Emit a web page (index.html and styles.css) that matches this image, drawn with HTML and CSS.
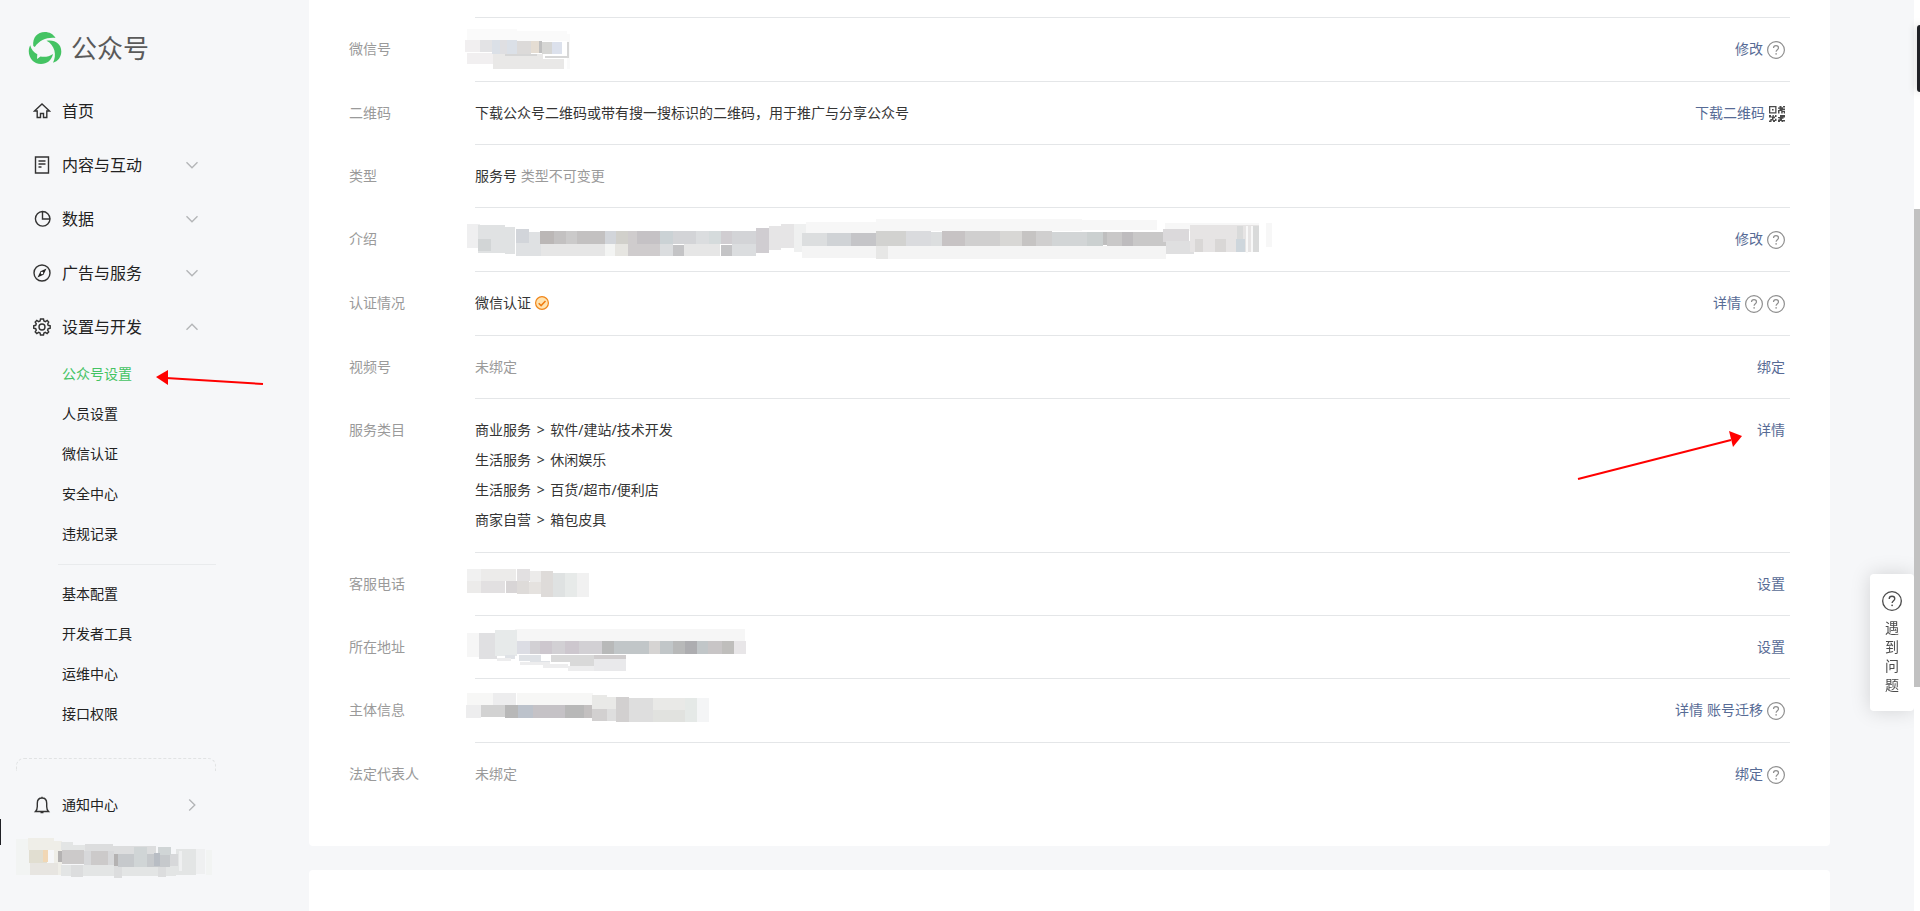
FILE: index.html
```
<!DOCTYPE html>
<html lang="zh-CN">

<head>
    <meta charset="UTF-8">
    <title>公众号</title>

    <link rel="stylesheet" href="styles.css">
</head>

<body>
    <!-- shared icons -->
    <svg width="0" height="0" class="sprite">
        <symbol id="help" viewBox="0 0 18 18">
            <circle cx="9" cy="9" r="8.400" fill="none" stroke="currentColor" stroke-width="1.200" />
            <path d="M6.500 7.100c0-1.500 1-2.400 2.500-2.400s2.500.9 2.500 2.200c0 1.700-2.400 1.900-2.400 3.900" fill="none" stroke="currentColor" stroke-width="1.200" />
            <circle cx="9.100" cy="12.900" r=".8" fill="currentColor" />
        </symbol>
        <symbol id="chevron" viewBox="0 0 12 12">
            <path d="M.5 3.200L6 8.800l5.500-5.600" fill="none" stroke="currentColor" stroke-width="1.400" />
        </symbol>
    </svg>

    <aside class="sidebar">
        <div class="logo">
            <svg width="34" height="32" viewBox="0 0 34 32">
                <path fill="#44c363" d="M5.300 14C4.300 5.500 9.500 0 16.800 0c4.500 0 8.500 2 10.700 6C19.500 5 11.500 8 6.800 15z" />
                <path fill="#44c363" d="M18.500 8.800c8-1.500 14.800 2.700 14.800 10.700 0 5.500-3.300 9.800-8.300 11.200C29 23.500 27 13 18.500 8.800z" />
                <path fill="#44c363" d="M2.200 13.200C-2 21.500 3.500 32 13 32c6 0 10.500-3.500 12-10-3.700 2.700-8.300 3.300-12.500 2.600L9 27l.3-4.700C6 20.500 3.200 17.500 2.200 13.200z" />
            </svg>
            <span>公众号</span>
        </div>

        <nav>
            <a href="#" class="menu-item">
                <svg class="icon" viewBox="0 0 18 18"><path d="M1.500 9L9 2l7.500 7h-2.700v6.500h-3.300v-4h-3v4H4.200V9z" /></svg>
                <span>首页</span>
            </a>
            <a href="#" class="menu-item">
                <svg class="icon" viewBox="0 0 18 18"><path d="M2.500 1h13v16h-13zM5.500 5h7M5.500 8h7M5.500 11h3" /></svg>
                <span>内容与互动</span>
                <svg class="arrow"><use href="#chevron" /></svg>
            </a>
            <a href="#" class="menu-item">
                <svg class="icon" viewBox="0 0 18 18"><path d="M9.500 1.500a7.300 7.300 0 1 0 7.500 7.500H9.500zM9.500 1.500A7.500 7.500 0 0 1 17 9" /></svg>
                <span>数据</span>
                <svg class="arrow"><use href="#chevron" /></svg>
            </a>
            <a href="#" class="menu-item">
                <svg class="icon" viewBox="0 0 18 18"><circle cx="9" cy="9" r="8" /><path fill="#222" stroke="none" d="M13.500 4.500l-3 6.200-6 2.800 3-6.200z" /><circle cx="9" cy="9" r=".6" stroke="#f6f7f9" /></svg>
                <span>广告与服务</span>
                <svg class="arrow"><use href="#chevron" /></svg>
            </a>
            <a href="#" class="menu-item">
                <svg class="icon" viewBox="0 0 18 18">
                    <circle cx="9" cy="9" r="3" />
                    <path d="M7.500 1h3l.4 2 1.500.6 1.800-1.100 1.500 1.600-1 1.900.5 1.300 2 .5v2.400l-2 .5-.6 1.400 1.100 1.800-1.600 1.600-1.800-1.100-1.400.6-.4 2h-3l-.4-2-1.500-.6-1.800 1.100-1.600-1.600 1.100-1.800-.6-1.400-2-.5V7.800l2-.5.6-1.400-1.100-1.800 1.600-1.600 1.800 1.100L7.100 3z" />
                </svg>
                <span>设置与开发</span>
                <svg class="arrow up"><use href="#chevron" /></svg>
            </a>

            <ul class="submenu">
                <li><a href="#" class="active">公众号设置</a></li>
                <li><a href="#">人员设置</a></li>
                <li><a href="#">微信认证</a></li>
                <li><a href="#">安全中心</a></li>
                <li><a href="#">违规记录</a></li>
            </ul>
            <ul class="submenu second">
                <li><a href="#">基本配置</a></li>
                <li><a href="#">开发者工具</a></li>
                <li><a href="#">运维中心</a></li>
                <li><a href="#">接口权限</a></li>
            </ul>
        </nav>

        <div class="dashed"></div>

        <a href="#" class="menu-item notice">
            <svg class="icon" viewBox="0 0 18 18"><path d="M2.500 15.500h13c-1.300-1.300-1.800-2.500-1.800-5V7.200C13.700 4 11.800 2 9 2S4.300 4 4.300 7.200v3.300c0 2.500-.5 3.700-1.800 5zM7.500 16.500h3M9 .8V2" /></svg>
            <span>通知中心</span>
            <svg class="arrow right"><use href="#chevron" /></svg>
        </a>

        <!-- masked account name -->
        <svg class="mask-user" width="200" height="42">
            <g shape-rendering="crispEdges">
                <path fill="#f2f4f3" d="M0 1h14v36H0zM190 12h6v25h-6z" />
                <path fill="#efeee8" d="M12 0h26v12H12zM38 3h8v34h-8z" />
                <path fill="#e1ded1" d="M13 12h18v13H13z" />
                <path fill="#f1d7b5" d="M27 12h5v12h-5z" />
                <path fill="#e7e5e1" d="M14 25h28v12H14z" />
                <path fill="#e3e5e5" d="M45 4h12v8H45zM57 7h12v6H57zM45 27h115v11H45zM160 11h20v26h-20z" />
                <path fill="#dcddde" d="M69 6h28v8H69zM97 8h43v8H97zM55 27h12v12H55zM98 27h8v13h-8zM142 27h8v12h-8z" />
                <path fill="#b4b2b2" d="M42 13h4v11h-4zM98 16h4v12h-4z" />
                <path fill="#cccaca" d="M46 12h22v14H46zM75 13h22v14H75z" />
                <path fill="#d7d8da" d="M68 13h7v14h-7zM92 13h6v14h-6zM154 16h8v12h-8z" />
                <path fill="#c6c9cc" d="M102 16h52v13h-52z" />
                <path fill="#d0d5d6" d="M118 9h13v20h-13zM142 9h13v8h-13z" />
                <path fill="#b8bdc4" d="M138 15h6v13h-6z" />
                <path fill="#eff0f1" d="M180 11h9v25h-9zM163 13h3v20h-3z" />
            </g>
        </svg>

        <svg class="pointer" width="108" height="16">
            <path d="M10 8l97 6" stroke="#f00" stroke-width="2" />
            <path d="M0 7L12 0v15z" fill="#f00" />
        </svg>
    </aside>

    <main class="content">
        <section class="panel">
            <ul class="info-list">
                <li class="row">
                    <span class="label">微信号</span>
                    <div class="detail">
                        <svg class="mask" width="110" height="44">
                            <g shape-rendering="crispEdges">
                                <path fill="#fafafa" d="M2 0h50v12H2zM52 2h50v10H52zM102 5h3v35h-3z" />
                                <path fill="#f1eff0" d="M0 11h16v12H0zM2 24h26v11H2z" />
                                <path fill="#e3e3e5" d="M15 11h12v12H15z" />
                                <path fill="#dbe0e7" d="M27 11h8v14h-8zM42 11h10v14H42z" />
                                <path fill="#dfdfe2" d="M35 11h7v14h-7z" />
                                <path fill="#dcdad9" d="M52 12h14v13H52z" />
                                <path fill="#e5ddd3" d="M66 12h8v12h-8z" />
                                <path fill="#bfbfbf" d="M74 12h3v12h-3z" />
                                <path fill="#d6d6d4" d="M77 13h10v12H77z" />
                                <path fill="#dce1ec" d="M87 13h10v12H87z" />
                                <path fill="#e9e8e7" d="M28 25h50v15H28zM78 30h21v10H78z" />
                                <path fill="#d6d6d6" d="M40 25h32v2H40zM80 27h24v2H80zM102 13h2v16h-2z" />
                            </g>
                        </svg>
                    </div>
                    <div class="actions"><a href="#">修改</a><svg class="help"><use href="#help" /></svg></div>
                </li>
                <li class="row">
                    <span class="label">二维码</span>
                    <div class="detail">下载公众号二维码或带有搜一搜标识的二维码，用于推广与分享公众号</div>
                    <div class="actions"><a href="#">下载二维码</a>
                        <svg class="qr" width="16" height="16" viewBox="0 0 16 16">
                            <path fill="#4a4a4a" fill-rule="evenodd" d="M0 0h7.500v7.500H0zM1.300 1.300v4.900h4.900V1.300zM3 3h1.600v1.600H3zM10.500 0h2v1.200h1.500V0h2v1.500h-2v1h2V4h-2.500v.8H16v2.700h-1.300V6h-1v1.500h-1.500V5h-1.700v2.500H9V4h1.500V2.700H9V1.500h1.500zM0 9h2v1.500h1.500V9h1.300v1.500h1.200V9h1.500v2H6v1.300H4.500V14H6v-1.200h1.500V15H6v1H4v-1.500H2.500V16H0v-1.500h1.300V13H3v-1.500H0zM11 9h5v2.500h-1.500v1.300H13V14h3v1.500h-2V16h-1.500v-1H11v1H9v-2.500h1.500v-1.300H9V11h2z" />
                        </svg>
                    </div>
                </li>
                <li class="row">
                    <span class="label">类型</span>
                    <div class="detail">服务号 <span class="muted">类型不可变更</span></div>
                </li>
                <li class="row">
                    <span class="label">介绍</span>
                    <div class="detail">
                        <svg class="mask" width="810" height="44">
                            <g shape-rendering="crispEdges">
                                <path fill="#efeff0" d="M2 5h13v24H2z" />
                                <path fill="#e0e2e3" d="M13 6h27v28H13zM40 8h10v27H40z" />
                                <path fill="#d2d5d6" d="M13 20h13v12H13z" />
                                <path fill="#d2d5da" d="M51 10h13v14H51zM139 12h12v13h-12z" />
                                <path fill="#dfe1e3" d="M51 24h13v13H51zM64 13h12v24H64z" />
                                <path fill="#bbb7b6" d="M75 12h14v13H75z" />
                                <path fill="#c3c1c1" d="M89 12h51v13H89z" />
                                <path fill="#cbcaca" d="M101 12h11v13h-11z" />
                                <path fill="#e6e6e6" d="M76 25h64v12H76zM219 25h36v12h-36z" />
                                <path fill="#f3f4f3" d="M140 25h10v12h-10z" />
                                <path fill="#d1d0cb" d="M151 12h12v13h-12z" />
                                <path fill="#e6e5e1" d="M150 25h13v12h-13z" />
                                <path fill="#c5c2c5" d="M171 12h24v13h-24z" />
                                <path fill="#cfcccd" d="M163 12h9v13h-9zM163 25h32v12h-32z" />
                                <path fill="#cbd2d5" d="M195 12h13v13h-13z" />
                                <path fill="#d3d4d7" d="M208 12h23v13h-23zM267 12h24v13h-24z" />
                                <path fill="#dbdddf" d="M231 12h13v13h-13zM195 25h13v12h-13zM267 25h24v12h-24z" />
                                <path fill="#d5dbdc" d="M244 12h12v13h-12z" />
                                <path fill="#c4c4c6" d="M208 26h11v11h-11zM256 26h11v11h-11z" />
                                <path fill="#d0cdd1" d="M256 12h11v13h-11zM291 9h13v25h-13z" />
                                <path fill="#e6e5e6" d="M304 7h12v24h-12zM316 5h13v24h-13z" />
                                <path fill="#eff0f0" d="M329 5h12v28h-12z" />
                                <path fill="#f7f7f7" d="M341 3h70v11h-70zM411 0h74v12h-74zM485 0h132v12H485zM617 1h75v10h-75zM700 4h94v8h-94zM801 4h6v24h-6z" />
                                <path fill="#dcdedf" d="M337 14h25v13h-25zM466 13h11v14h-11z" />
                                <path fill="#d0d3d6" d="M362 14h24v13h-24z" />
                                <path fill="#c5c5c8" d="M386 14h25v13h-25z" />
                                <path fill="#d2d2d0" d="M411 12h30v15h-30z" />
                                <path fill="#dadbde" d="M441 12h25v15h-25z" />
                                <path fill="#f4f4f4" d="M337 27h74v12h-74zM423 27h278v13H423z" />
                                <path fill="#e7e7e6" d="M411 27h12v13h-12z" />
                                <path fill="#c7c3c4" d="M477 12h23v15h-23z" />
                                <path fill="#d0cfcf" d="M500 12h35v15h-35zM568 12h19v15h-19z" />
                                <path fill="#d8d7d5" d="M535 12h22v15h-22z" />
                                <path fill="#c6c4c3" d="M557 12h14v15h-14z" />
                                <path fill="#d2d5d6" d="M587 13h35v14h-35z" />
                                <path fill="#cbd0d0" d="M622 13h16v14h-16z" />
                                <path fill="#bfbfbf" d="M638 13h4v13h-4z" />
                                <path fill="#c9c8c8" d="M642 13h59v14h-59z" />
                                <path fill="#bebcbe" d="M657 13h11v14h-11z" />
                                <path fill="#dbd9db" d="M698 10h26v13h-26z" />
                                <path fill="#dfdfe0" d="M701 22h28v13h-28z" />
                                <path fill="#e6e4e4" d="M725 6h69v27h-69z" />
                                <path fill="#d9d7d6" d="M730 20h8v13h-8zM750 20h11v13h-11z" />
                                <path fill="#ced6dc" d="M771 20h9v13h-9z" />
                                <path fill="#d9dada" d="M788 7h6v26h-6zM772 7h6v13h-6z" />
                                <path fill="#f8f8f8" d="M781 7h2v27h-2zM786 7h2v26h-2z" />
                            </g>
                        </svg>
                    </div>
                    <div class="actions"><a href="#">修改</a><svg class="help"><use href="#help" /></svg></div>
                </li>
                <li class="row">
                    <span class="label">认证情况</span>
                    <div class="detail">微信认证<svg class="verified" width="14" height="14" viewBox="0 0 14 14">
                            <circle cx="7" cy="7" r="6.400" fill="#ffe3b0" stroke="#f08519" stroke-width="1.200" />
                            <path d="M3.700 7.200l2.400 2.400 4.400-4.600" fill="none" stroke="#f07c10" stroke-width="1.500" />
                        </svg></div>
                    <div class="actions"><a href="#">详情</a><svg class="help"><use href="#help" /></svg><svg class="help"><use href="#help" /></svg></div>
                </li>
                <li class="row">
                    <span class="label">视频号</span>
                    <div class="detail muted">未绑定</div>
                    <div class="actions"><a href="#">绑定</a></div>
                </li>
                <li class="row">
                    <span class="label">服务类目</span>
                    <ul class="detail category">
                        <li>商业服务 <span>&gt;</span> 软件/建站/技术开发</li>
                        <li>生活服务 <span>&gt;</span> 休闲娱乐</li>
                        <li>生活服务 <span>&gt;</span> 百货/超市/便利店</li>
                        <li>商家自营 <span>&gt;</span> 箱包皮具</li>
                    </ul>
                    <div class="actions"><a href="#">详情</a></div>
                    <svg class="pointer" width="166" height="50">
                        <path d="M1 48L154 9" stroke="#f00" stroke-width="2" />
                        <path d="M165 5l-13-5 4 16z" fill="#f00" />
                    </svg>
                </li>
                <li class="row">
                    <span class="label">客服电话</span>
                    <div class="detail">
                        <svg class="mask" width="130" height="44">
                            <g shape-rendering="crispEdges">
                                <path fill="#f1f1f1" d="M2 5h14v12H2zM112 9h12v24h-12z" />
                                <path fill="#ecebea" d="M2 17h14v12H2zM16 5h35v12H16zM65 7h12v12H65z" />
                                <path fill="#e2e0e1" d="M16 17h12v12H16zM28 17h12v12H28zM52 5h13v12H52z" />
                                <path fill="#d8d5d6" d="M41 17h11v12H41z" />
                                <path fill="#dedbd9" d="M52 17h12v13H52zM76 7h12v26H76z" />
                                <path fill="#e5e2df" d="M64 18h12v12H64z" />
                                <path fill="#dfe2e2" d="M88 9h12v24H88z" />
                                <path fill="#e7eae9" d="M100 9h12v24h-12z" />
                            </g>
                        </svg>
                    </div>
                    <div class="actions"><a href="#">设置</a></div>
                </li>
                <li class="row">
                    <span class="label">所在地址</span>
                    <div class="detail">
                        <svg class="mask" width="290" height="46">
                            <g shape-rendering="crispEdges">
                                <path fill="#f6f6f6" d="M2 6h14v24H2zM50 2h230v12H50z" />
                                <path fill="#e0e0e2" d="M14 6h18v26H14z" />
                                <path fill="#e7eaea" d="M30 3h22v26H30z" />
                                <path fill="#dcdde4" d="M52 14h14v13H52z" />
                                <path fill="#d2d0d4" d="M65 14h72v13H65z" />
                                <path fill="#cdc7ce" d="M75 14h12v13H75zM100 14h14v13h-14z" />
                                <path fill="#b8b9b9" d="M137 14h12v13h-12zM208 14h12v13h-12z" />
                                <path fill="#c1c6c8" d="M149 14h35v13h-35zM195 14h13v13h-13zM232 14h11v13h-11z" />
                                <path fill="#d6d4d3" d="M184 14h11v13h-11z" />
                                <path fill="#adadb0" d="M220 14h12v13h-12z" />
                                <path fill="#c8c5c6" d="M243 14h14v13h-14z" />
                                <path fill="#bfbebc" d="M257 14h12v13h-12z" />
                                <path fill="#e8e6e8" d="M269 14h12v13h-12z" />
                                <path fill="#dfe2e6" d="M40 28h10v4H40zM54 28h22v6H54zM65 34h20v4H65z" />
                                <path fill="#d9d9d9" d="M86 28h20v7H86zM105 28h24v12h-24z" />
                                <path fill="#ededee" d="M32 31h14v3H32zM55 35h30v3H55zM78 37h25v4H78zM103 39h27v5h-27z" />
                                <path fill="#d0cdce" d="M129 28h32v4h-32z" />
                                <path fill="#e9e9eb" d="M129 32h32v12h-32z" />
                            </g>
                        </svg>
                    </div>
                    <div class="actions"><a href="#">设置</a></div>
                </li>
                <li class="row">
                    <span class="label">主体信息</span>
                    <div class="detail">
                        <svg class="mask" width="250" height="44">
                            <g shape-rendering="crispEdges">
                                <path fill="#f7f7f6" d="M2 3h26v12H2zM52 3h76v12H52z" />
                                <path fill="#ededee" d="M28 3h23v12H28zM1 15h15v13H1z" />
                                <path fill="#d2d2d2" d="M16 15h12v12H16zM28 15h12v12H28z" />
                                <path fill="#b8b8b8" d="M40 15h13v13H40zM100 15h20v13h-20z" />
                                <path fill="#bcc2cb" d="M53 15h15v13H53z" />
                                <path fill="#c5c2c6" d="M68 15h32v13H68z" />
                                <path fill="#c3c0c0" d="M119 15h9v13h-9z" />
                                <path fill="#e9e9e7" d="M127 5h15v14h-15zM142 7h10v12h-10zM188 8h32v12h-32z" />
                                <path fill="#d2d0d0" d="M127 19h15v12h-15zM151 7h13v25h-13z" />
                                <path fill="#dedede" d="M142 19h9v12h-9zM164 8h24v24h-24z" />
                                <path fill="#e1e2df" d="M188 20h32v12h-32z" />
                                <path fill="#e5e9e7" d="M220 8h12v24h-12z" />
                                <path fill="#f4f5f6" d="M232 8h12v24h-12z" />
                            </g>
                        </svg>
                    </div>
                    <div class="actions"><a href="#">详情</a> <a href="#">账号迁移</a><svg class="help"><use href="#help" /></svg></div>
                </li>
                <li class="row">
                    <span class="label">法定代表人</span>
                    <div class="detail muted">未绑定</div>
                    <div class="actions"><a href="#">绑定</a><svg class="help"><use href="#help" /></svg></div>
                </li>
            </ul>
        </section>

        <section class="panel">
            <h2>注册信息</h2>
        </section>
    </main>

    <button class="feedback">
        <svg width="20" height="20"><use href="#help" /></svg>
        <span>遇到问题</span>
    </button>

    <div class="scrollbar"><div class="thumb"></div></div>
    <div class="edge-tab right"></div>
    <div class="edge-tab left"></div>
</body>

</html>
```

FILE: styles.css
```
* {
    padding: 0;
    margin: 0;
    box-sizing: border-box;
}

html,
body {
    height: 100%;
}

body {
    display: flex;
    overflow: hidden;
    background-color: #f6f7f9;
    color: #353535;
    font-family: "Noto Sans", "Noto Sans CJK SC", sans-serif;
    font-size: 14px;
    line-height: 22px;
}

a {
    color: #576b95;
    text-decoration: none;
}

ul {
    list-style: none;
}

.sprite {
    position: absolute;
}

/* sidebar */
.sidebar {
    position: relative;
    flex-shrink: 0;
    width: 231px;
    padding: 32px 15px 0 16px;
}

.logo {
    display: flex;
    align-items: center;
    gap: 9px;
    height: 32px;
    margin: 0 0 20px 12px;
    color: #5a5a5a;
    font-size: 26px;
}

.menu-item {
    display: flex;
    align-items: center;
    height: 54px;
    padding: 0 18px 0 17px;
    color: #222;
    font-size: 16px;
}

.icon {
    width: 18px;
    height: 18px;
    margin-right: 11px;
    fill: none;
    stroke: #333;
    stroke-width: 1.4;
}

.arrow {
    width: 12px;
    height: 12px;
    margin-left: auto;
    color: #b4b6b8;
}

.arrow.up {
    transform: rotate(180deg);
}

.arrow.right {
    transform: rotate(-90deg);
}

.submenu li {
    height: 40px;
    padding-left: 46px;
    line-height: 40px;
}

.submenu a {
    color: #222;
}

.submenu a.active {
    color: #44c363;
}

.submenu.second {
    margin: 10px 0 24px 42px;
    padding-top: 9px;
    border-top: 1px solid #e9ebed;
}

.submenu.second li {
    padding-left: 4px;
}

.dashed {
    height: 13px;
    margin-bottom: 7px;
    border: 1px dashed #e1e3e4;
    border-bottom: none;
    border-radius: 8px 8px 0 0;
}

.notice {
    font-size: 14px;
}

.mask-user {
    display: block;
    margin-top: 6px;
}

.sidebar .pointer {
    position: absolute;
    top: 370px;
    left: 156px;
}

/* account settings */
.content {
    flex: 1;
    margin: 0 90px 0 78px;
}

.panel {
    margin-bottom: 24px;
    padding: 17px 40px 40px;
    background-color: #fff;
    border-radius: 0 0 4px 4px;
}

.panel + .panel {
    padding-top: 37px;
    border-radius: 4px;
}

.panel h2 {
    color: #222;
    font-size: 20px;
    font-weight: 400;
    line-height: 32px;
}

.row {
    position: relative;
    display: flex;
    padding: 20px 0;
}

/* the separator starts after the label column */
.row::before {
    content: "";
    position: absolute;
    top: 0;
    left: 126px;
    right: 0;
    border-top: 1px solid #e4e6e8;
}

.row > * {
    padding-top: 1px;
}

.label {
    flex-shrink: 0;
    width: 126px;
    color: #9a9a9a;
}

.detail {
    position: relative;
    flex: 1;
}

.muted {
    color: #9a9a9a;
}

.category {
    display: flex;
    flex-direction: column;
    gap: 8px;
    padding-bottom: 1px;
}

.category span {
    margin: 0 2px;
}

.mask {
    position: absolute;
    top: -8px;
    left: -10px;
}

.verified {
    margin-left: 4px;
    vertical-align: -2px;
}

.actions {
    display: flex;
    gap: 4px;
    padding-right: 5px;
}

.help {
    width: 18px;
    height: 18px;
    margin-top: 3px;
    margin-bottom: 2px;
    color: #8f8f8f;
}

.qr {
    margin-top: 4px;
}

.row .pointer {
    position: absolute;
    top: 33px;
    right: 47px;
    padding: 0;
}

/* floating parts */
.feedback {
    position: fixed;
    top: 574px;
    right: 6px;
    display: flex;
    flex-direction: column;
    align-items: center;
    gap: 7px;
    width: 44px;
    padding: 17px 15px;
    background-color: #fff;
    border: none;
    border-radius: 4px;
    box-shadow: 0 0 20px rgba(0, 0, 0, 0.15);
    color: #4c4c4c;
    font-family: inherit;
    font-size: 14px;
    line-height: 19px;
    cursor: pointer;
}

.feedback span {
    width: 14px;
}

.scrollbar {
    position: fixed;
    top: 0;
    right: 0;
    bottom: 0;
    width: 6px;
    padding-top: 209px;
    background-color: #fff;
}

.thumb {
    height: 478px;
    background-color: #c1c1c1;
}

.edge-tab {
    position: fixed;
    background-color: #1f2025;
}

.edge-tab.right {
    top: 25px;
    right: 0;
    width: 3px;
    height: 67px;
    border-radius: 4px 0 0 4px;
    box-shadow: 0 0 8px rgba(0, 0, 0, 0.3);
}

.edge-tab.left {
    top: 819px;
    left: 0;
    width: 1px;
    height: 26px;
}
```
